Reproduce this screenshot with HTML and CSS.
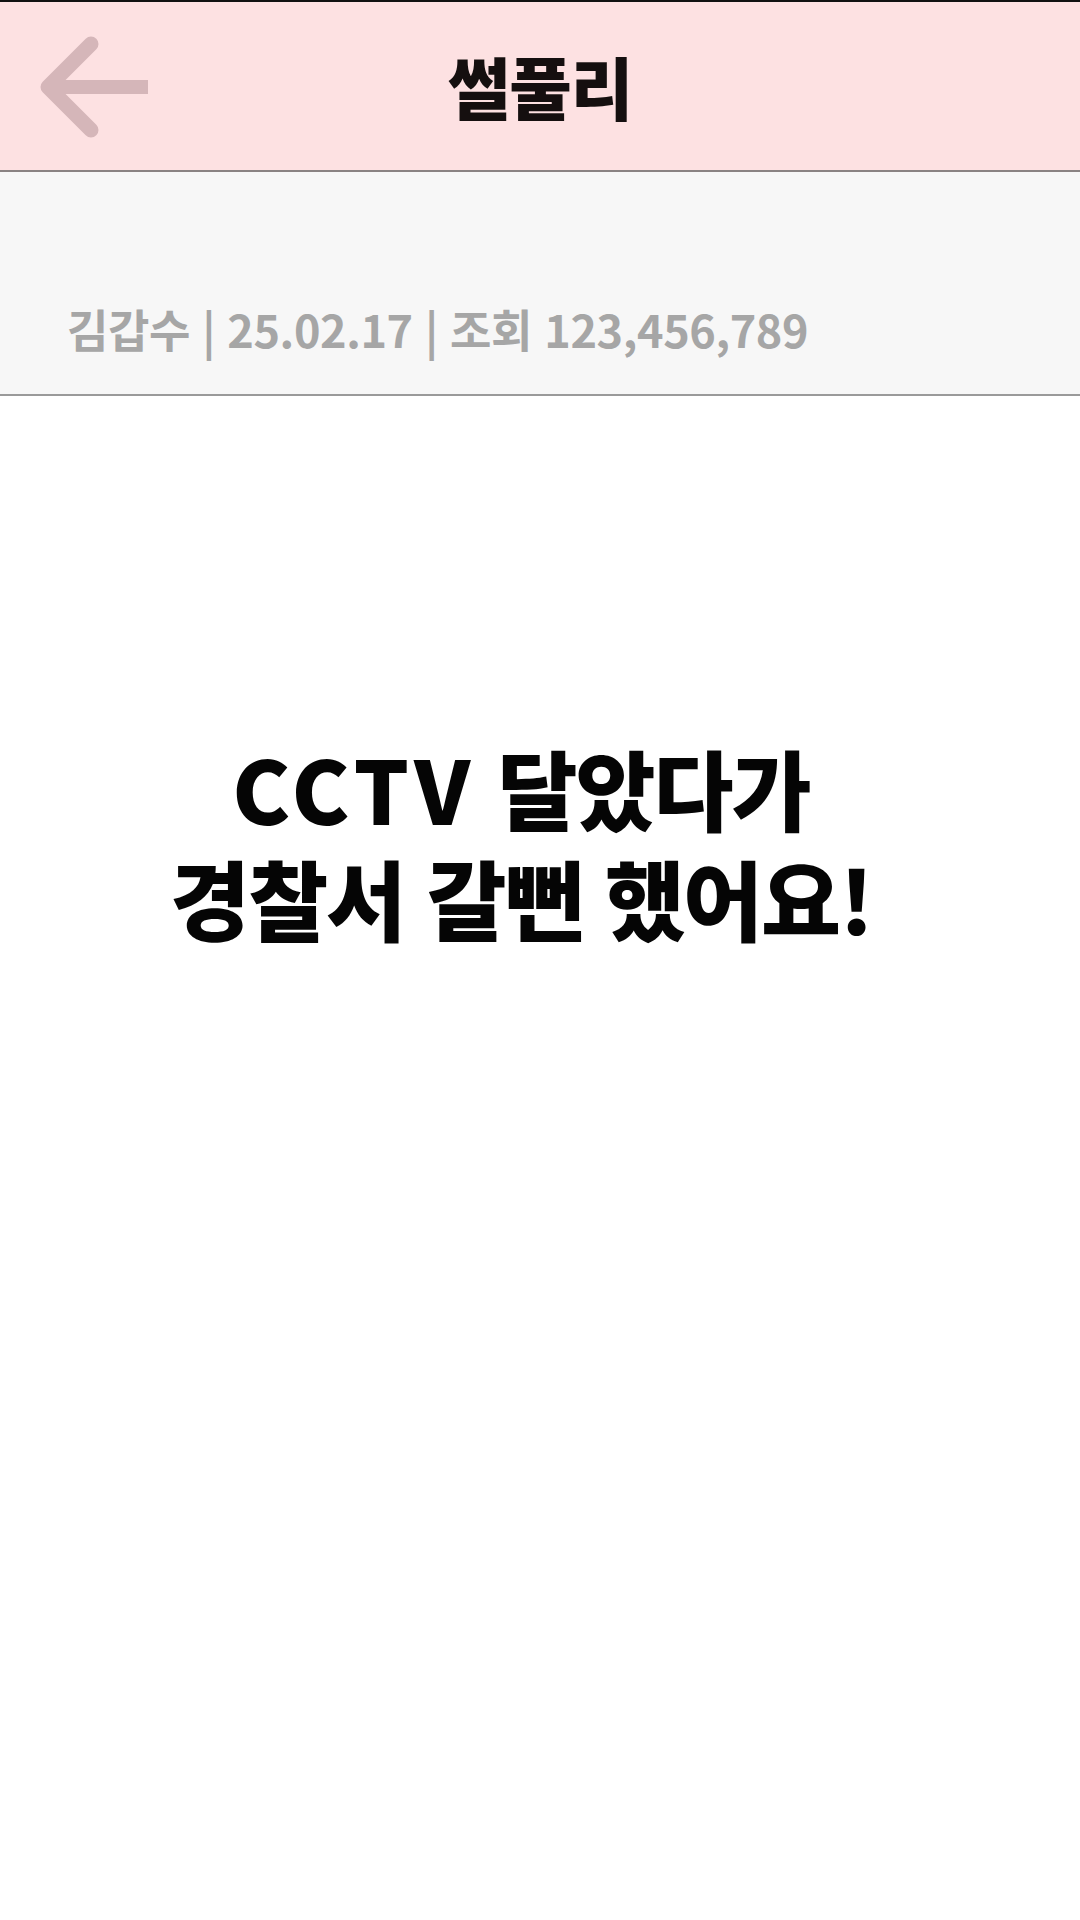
FILE: index.html
```html
<!DOCTYPE html>
<html lang="ko">
<head>
<meta charset="utf-8">
<title>썰풀리</title>
<link rel="stylesheet" href="styles.css">
</head>
<body>
<div class="app">
  <header class="topbar">
    <div class="back">
      <svg width="160" height="168" viewBox="0 0 160 168" aria-hidden="true">
        <path d="M91 42 L48 85 L91 128" fill="none" stroke="#d5b6b9" stroke-width="15" stroke-linecap="round" stroke-linejoin="round"/>
        <path d="M50 85 H148" fill="none" stroke="#d5b6b9" stroke-width="14" stroke-linecap="butt"/>
      </svg>
    </div>
    <h1 class="title">썰풀리</h1>
    <div class="spacer"></div>
  </header>
  <section class="meta">
    <p class="meta-line">김갑수 | 25.02.17 | 조회 123,456,789</p>
  </section>
  <main class="content">
    <p class="headline"><span class="latin">CCTV</span> 달았다가<br>경찰서 갈뻔 했어요!</p>
  </main>
</div>
</body>
</html>
```
FILE: styles.css
```css
html, body {
  margin: 0;
  padding: 0;
  background: #ffffff;
}
body {
  font-family: "Noto Sans CJK KR", "Noto Sans", sans-serif;
  width: 1080px;
  height: 1920px;
  overflow: hidden;
}
.app {
  display: flex;
  flex-direction: column;
  height: 1920px;
}
.topbar {
  height: 168px;
  border-top: 2px solid #111111;
  border-bottom: 2px solid #8a8383;
  background: #fde1e2;
  display: grid;
  grid-template-columns: 1fr auto 1fr;
  align-items: center;
}
.back {
  display: flex;
  align-items: center;
  height: 168px;
}
.back svg {
  display: block;
}
.title {
  margin: 0;
  font-size: 68px;
  font-weight: 900;
  color: #150f0f;
  letter-spacing: -1px;
  line-height: 1;
  padding-top: 0;
}
.meta {
  height: 224px;
  background: #f7f7f7;
  border-bottom: 2px solid #9a9a9a;
  display: flex;
  align-items: flex-end;
  padding-left: 67px;
  box-sizing: border-box;
}
.meta-line {
  margin: 0 0 43px 0;
  font-size: 45px;
  font-weight: 700;
  color: #a6a6a6;
  letter-spacing: -0.4px;
  line-height: 1;
}
.content {
  flex: 1;
  padding-top: 336px;
  padding-right: 38px;
  text-align: center;
}
.headline {
  margin: 0;
  font-size: 87px;
  font-weight: 900;
  line-height: 110px;
  color: #050505;
  letter-spacing: -2px;
}
.latin {
  letter-spacing: 5px;
}
```
